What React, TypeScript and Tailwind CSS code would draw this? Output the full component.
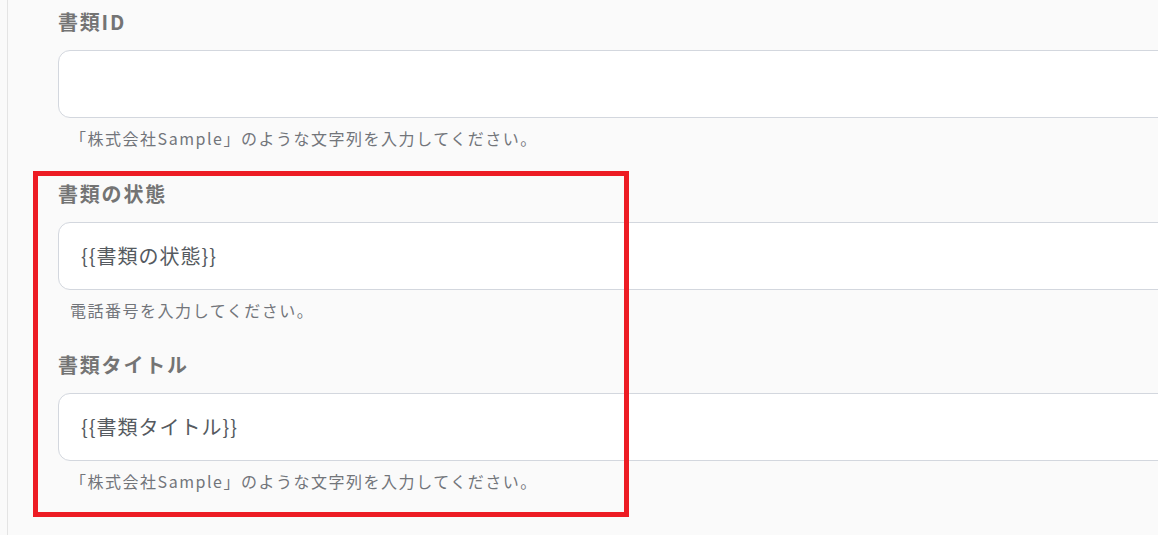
import React from 'react';

interface FieldProps {
  label: string;
  value: string;
  help: string;
}

const fontStack = 'font-["Meiryo","Noto_Sans_CJK_JP",sans-serif]';

const Field: React.FC<FieldProps> = ({ label, value, help }) => {
  return (
    <div className="flex flex-col">
      <label className="text-[20px] leading-[28px] font-bold text-[#747474] tracking-[0.09em]">{label}</label>
      <div className="mt-[14px] h-[68px] w-[1140px] rounded-[12px] border border-[#d3d7de] bg-white flex items-center pl-[22px]">
        <span className="text-[20px] text-[#555a60] tracking-[0.05em]">{value}</span>
      </div>
      <p className="mt-[10px] pl-[12px] text-[16px] leading-[20px] text-[#72757a] tracking-[0.095em]">{help}</p>
    </div>
  );
};

export default function App() {
  const fields: FieldProps[] = [
    { label: '書類ID', value: '', help: '「株式会社Sample」のような文字列を入力してください。' },
    { label: '書類の状態', value: '{{書類の状態}}', help: '電話番号を入力してください。' },
    { label: '書類タイトル', value: '{{書類タイトル}}', help: '「株式会社Sample」のような文字列を入力してください。' },
  ];

  return (
    <div className={`relative h-[535px] w-full overflow-hidden bg-[#fafafa] ${fontStack}`}>
      <div className="ml-[7px] h-full border-l border-[#e4e4e4] pl-[50px] pt-[8px]">
        <div className="flex flex-col gap-[31.5px]">
          {fields.map((f) => (
            <Field key={f.label} {...f} />
          ))}
        </div>
      </div>

      {/* annotation box */}
      <div className="absolute left-[33px] top-[171px] h-[346px] w-[596px] border-[5px] border-[#ed1c24]" />
    </div>
  );
}
